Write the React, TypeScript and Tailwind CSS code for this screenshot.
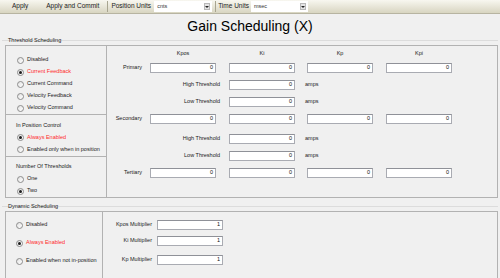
import React from "react";

interface RadioProps {
  label: string;
  checked?: boolean;
  red?: boolean;
  className?: string;
}

function Radio({ label, checked, red, className = "" }: RadioProps) {
  return (
    <div className={`flex items-center h-[12px] ${className}`}>
      <span className="w-[7px] h-[7px] rounded-full border border-[#8c8c8c] bg-linear-to-br from-[#e2e2e2] to-[#ffffff] flex items-center justify-center shrink-0">
        {checked && <span className="w-[3px] h-[3px] rounded-full bg-[#1c1c1c]" />}
      </span>
      <span className={`ml-[3px] text-[5.5px] leading-none whitespace-nowrap ${red ? "text-[#ff2a2a]" : "text-[#1a1a1a]"}`}>
        {label}
      </span>
    </div>
  );
}

function Field({ value, className = "" }: { value: string; className?: string }) {
  return (
    <div className={`w-[66px] h-[10px] shrink-0 bg-white border border-[#a9abb2] border-t-[#8f9198] flex items-center justify-end pr-[2px] text-[5.5px] leading-none text-[#111] ${className}`}>
      {value}
    </div>
  );
}

function Combo({ value, className = "" }: { value: string; className?: string }) {
  return (
    <div className={`h-[11px] bg-white flex items-center justify-between pl-[3px] pr-[2px] ${className}`}>
      <span className="text-[5.5px] leading-none text-[#333]">{value}</span>
      <span className="w-[6px] h-[7px] bg-[#e4e4e4] border border-[#b8b8b8] flex items-center justify-center">
        <span className="w-0 h-0 border-l-[2px] border-r-[2px] border-t-[2px] border-l-transparent border-r-transparent border-t-[#222]" />
      </span>
    </div>
  );
}

function GroupHeader({ label, lineTop, height }: { label: string; lineTop: string; height: string }) {
  return (
    <div className={`grid ${height}`}>
      <div className={`col-start-1 row-start-1 mx-[2px] ${lineTop} border-t border-[#dcdcdc]`} />
      <div className="col-start-1 row-start-1 flex items-center pl-[8px] text-[5.5px] leading-none text-[#1a1a1a]">
        {label}
      </div>
    </div>
  );
}

function GainRow({ label, values }: { label: string; values: string[] }) {
  return (
    <div className="flex items-center h-[17px]">
      <div className="w-[35px] text-right text-[5.5px] leading-none text-[#1a1a1a]">{label}</div>
      <Field value={values[0]} className="ml-[8px]" />
      <Field value={values[1]} className="ml-[13px]" />
      <Field value={values[2]} className="ml-[12px]" />
      <Field value={values[3]} className="ml-[13px]" />
    </div>
  );
}

function ThresholdRow({ label, extra = "" }: { label: string; extra?: string }) {
  return (
    <div className={`flex items-center h-[17px] ${extra}`}>
      <div className="w-[113px] text-right text-[5.5px] leading-none text-[#1a1a1a]">{label}</div>
      <Field value="0" className="ml-[9px]" />
      <span className="ml-[10px] text-[5.5px] leading-none text-[#1a1a1a]">amps</span>
    </div>
  );
}

function MultiplierRow({ label, extra = "" }: { label: string; extra?: string }) {
  return (
    <div className={`flex items-center h-[12px] ${extra}`}>
      <div className="w-[49px] text-right text-[5.5px] leading-none text-[#1a1a1a]">{label}</div>
      <Field value="1" className="ml-[5px]" />
    </div>
  );
}

export default function App() {
  return (
    <div className="w-[500px] h-[278px] overflow-hidden bg-[#f0f0f0] font-['Liberation_Sans',Arial,sans-serif] text-[#1a1a1a]">
      {/* toolbar */}
      <div className="h-[14px] flex items-center bg-linear-to-b from-[#f8f7f0] to-[#d8d5c1] border-b border-[#b7b4a1] text-[6.5px] leading-none text-[#222]">
        <span className="ml-[12px]">Apply</span>
        <span className="ml-[18px]">Apply and Commit</span>
        <span className="ml-[8px] w-px h-[11px] bg-[#a8a590]" />
        <span className="ml-[3px]">Position Units</span>
        <Combo value="cnts" className="ml-[3px] w-[58px]" />
        <span className="ml-[3px] w-px h-[11px] bg-[#a8a590]" />
        <span className="ml-[2px]">Time Units</span>
        <Combo value="msec" className="ml-[2px] w-[57px]" />
      </div>

      <div className="h-[23px] flex items-center justify-center text-[14px] leading-none text-black">
        Gain Scheduling (X)
      </div>

      <GroupHeader label="Threshold Scheduling" lineTop="mt-[3px]" height="h-[8px]" />

      <div className="ml-[5px] mr-[2px] h-[153px] border border-[#b2b2b2] flex">
        {/* left column */}
        <div className="w-[101px] border-r border-[#b2b2b2] flex flex-col">
          <div className="h-[70px] border-b border-[#b2b2b2] pt-[8px] pl-[11px]">
            <Radio label="Disabled" />
            <Radio label="Current Feedback" checked red />
            <Radio label="Current Command" />
            <Radio label="Velocity Feedback" />
            <Radio label="Velocity Command" />
          </div>
          <div className="h-[42px] border-b border-[#b2b2b2] pt-[4px] pl-[11px]">
            <div className="h-[12px] flex items-center -ml-[1px] text-[5.5px] leading-none">In Position Control</div>
            <Radio label="Always Enabled" checked red />
            <Radio label="Enabled only when in position" />
          </div>
          <div className="flex-1 pt-[4px] pl-[11px]">
            <div className="h-[12px] flex items-center -ml-[1px] text-[5.5px] leading-none">Number Of Thresholds</div>
            <Radio label="One" className="h-[11px]" />
            <Radio label="Two" checked className="h-[11px]" />
          </div>
        </div>

        {/* right gains */}
        <div className="flex-1 flex flex-col pt-[2px]">
          <div className="h-[11px] flex items-center text-[5.5px] leading-none">
            <div className="w-[35px]" />
            <div className="ml-[8px] w-[66px] text-center">Kpos</div>
            <div className="ml-[13px] w-[66px] text-center">Ki</div>
            <div className="ml-[12px] w-[66px] text-center">Kp</div>
            <div className="ml-[13px] w-[66px] text-center">Kpi</div>
          </div>
          <GainRow label="Primary" values={["0", "0", "0", "0"]} />
          <ThresholdRow label="High Threshold" />
          <ThresholdRow label="Low Threshold" />
          <GainRow label="Secondary" values={["0", "0", "0", "0"]} />
          <ThresholdRow label="High Threshold" extra="mt-[3px]" />
          <ThresholdRow label="Low Threshold" />
          <GainRow label="Tertiary" values={["0", "0", "0", "0"]} />
        </div>
      </div>

      <div className="h-[4px]" />
      <GroupHeader label="Dynamic Scheduling" lineTop="mt-[4px]" height="h-[9px]" />

      <div className="ml-[5px] mr-[2px] h-[70px] border border-b-0 border-[#b2b2b2] flex">
        <div className="w-[97px] border-r border-[#b2b2b2] flex flex-col gap-[6px] pt-[7px] pl-[10px]">
          <Radio label="Disabled" />
          <Radio label="Always Enabled" checked red />
          <Radio label="Enabled when not in-position" />
        </div>
        <div className="flex-1 flex flex-col pt-[7px]">
          <MultiplierRow label="Kpos Multiplier" />
          <MultiplierRow label="Ki Multiplier" extra="mt-[4px]" />
          <MultiplierRow label="Kp Multiplier" extra="mt-[7px]" />
        </div>
      </div>
    </div>
  );
}
